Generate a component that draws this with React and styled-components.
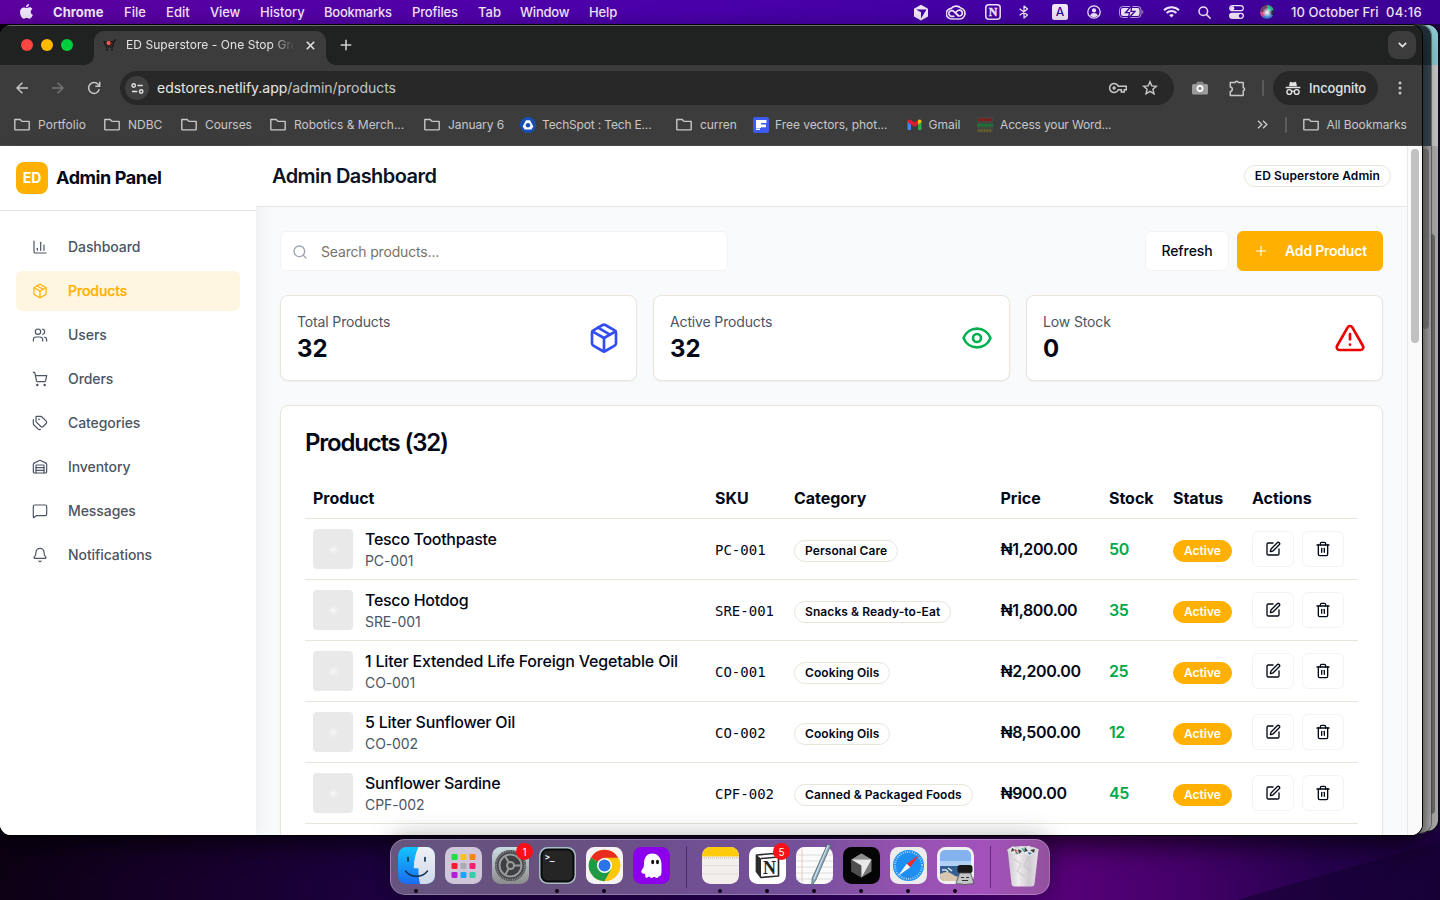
import React from "react";
import styled, { createGlobalStyle } from "styled-components";
import {
  ChartColumn, Package, Users, ShoppingCart, Tags, Warehouse, MessageSquare, Bell,
  Search, Plus, Eye, TriangleAlert, SquarePen, Trash2,
} from "lucide-react";

const Global = createGlobalStyle`
  *, *::before, *::after { box-sizing: border-box; }
  html, body { margin: 0; padding: 0; overflow: hidden; }
  body { font-family: Inter, "Liberation Sans", sans-serif; color: #020817; }
  svg { display: block; flex: none; }
`;

/* ---------- desktop ---------- */
const Desktop = styled.div`
  position: relative;
  width: 1440px;
  height: 900px;
  overflow: hidden;
  background:
    linear-gradient(164deg, transparent 62%, rgba(18, 0, 45, 0.55) 62.3%) 1130px 835px / 310px 65px no-repeat,
    linear-gradient(90deg, #0c0014 0%, #17002b 14%, #1c0040 27%, #25004f 50%, #38006b 64%, #560078 74%, #45006a 82%, #25004c 92%, #1c0040 100%);
`;

const MenuBar = styled.header`
  display: flex;
  align-items: center;
  height: 24px;
  padding-left: 53px;
  position: relative;
  background: linear-gradient(90deg, #5c009f 0%, #5400a6 20%, #4a00aa 45%, #4300a2 75%, #3c0094 100%);
  color: #f0e6fa;
  font-size: 13px;
  font-weight: 500;
  white-space: nowrap;
`;
const AppleSlot = styled.span`
  position: absolute;
  left: 19px;
  top: 3px;
`;
const MenuItem = styled.span`
  width: ${(p) => p.$w}px;
  padding-bottom: 1px;
  font-weight: ${(p) => (p.$bold ? 700 : 500)};
  letter-spacing: ${(p) => p.$ls || 0}px;
`;
const StatusSlot = styled.span`
  display: flex;
  justify-content: center;
  width: ${(p) => p.$w}px;
`;
const StatusGroup = styled.div`
  display: flex;
  align-items: center;
  margin-left: auto;
  width: 537px;
`;
const Clock = styled.span`
  margin-left: 4px;
  padding-bottom: 1px;
  width: ${(p) => p.$w}px;
  letter-spacing: ${(p) => p.$ls}px;
`;

/* ---------- windows ---------- */
const BackWindow = styled.div`
  position: absolute;
  top: 25px;
  left: 1380px;
  width: ${(p) => p.$w}px;
  height: ${(p) => p.$h}px;
  border-radius: 11px;
  overflow: hidden;
  display: flex;
  flex-direction: column;
  background: ${(p) => p.$body};
  box-shadow: 0 0 0 1px ${(p) => p.$edge};
  &::before { content: ""; height: 40px; background: ${(p) => p.$top}; }
  &::after { content: ""; height: 81px; background: ${(p) => p.$bar}; }
`;
const BackThumb = styled.i`
  position: absolute;
  right: ${(p) => p.$right}px;
  top: ${(p) => p.$top}px;
  width: 8px;
  height: ${(p) => p.$h}px;
  border-radius: 4px;
  background: ${(p) => p.$c};
`;
const Window = styled.div`
  position: absolute;
  top: 25px;
  left: 0;
  width: 1422px;
  height: 810px;
  border-radius: 11px;
  overflow: hidden;
  background: #3c3c3c;
  box-shadow: 0 0 0 1px #000, 0 10px 26px rgba(0, 0, 0, 0.7);
  display: flex;
  flex-direction: column;
`;

const TabStrip = styled.div`
  display: flex;
  height: 40px;
  flex: none;
  background: #1f2221;
  border-top: 1px solid #6b6e6d;
  padding: 5px 6px 0 21px;
`;
const Lights = styled.div`
  display: flex;
  gap: 8px;
  padding-top: 8px;
  width: 73px;
`;
const Light = styled.i`
  width: 12px;
  height: 12px;
  border-radius: 50%;
  background: ${(p) => p.$c};
`;
const Tab = styled.div`
  position: relative;
  display: flex;
  align-items: center;
  width: 232px;
  height: 34px;
  padding: 0 11px 6px 8px;
  border-radius: 10px 10px 0 0;
  background: #3c3c3c;
  > svg:last-of-type { margin-left: auto; }
  &::before, &::after {
    content: "";
    position: absolute;
    bottom: 0;
    width: 10px;
    height: 10px;
  }
  &::before { left: -10px; background: radial-gradient(circle at 0 0, transparent 9.6px, #3c3c3c 10.2px); }
  &::after { right: -10px; background: radial-gradient(circle at 100% 0, transparent 9.6px, #3c3c3c 10.2px); }
`;
const TabTitle = styled.span`
  margin-left: 9px;
  padding-bottom: 1px;
  width: 169px;
  overflow: hidden;
  white-space: nowrap;
  font-size: 12px;
  letter-spacing: 0.06px;
  color: #e3e3e3;
  mask-image: linear-gradient(90deg, #000 145px, transparent 169px);
`;
const NewTab = styled.span`
  padding: 8px 0 0 14px;
`;
const TabSearch = styled.span`
  margin-left: auto;
  width: 28px;
  height: 28px;
  border-radius: 9px;
  background: #3c3c3c;
  display: grid;
  place-items: center;
`;

const Toolbar = styled.div`
  display: flex;
  align-items: center;
  flex: none;
  height: 46px;
  padding-left: 4px;
`;
const ToolSlot = styled.span`
  display: flex;
  justify-content: center;
  align-items: center;
  width: ${(p) => p.$w}px;
`;
const Omnibox = styled.div`
  display: flex;
  align-items: center;
  width: 1054px;
  height: 34px;
  margin-left: 8px;
  padding-left: 5px;
  border-radius: 17px;
  background: #282828;
  font-size: 14px;
  letter-spacing: -0.03px;
  color: #c7c7c7;
`;
const SiteInfo = styled.span`
  width: 24px;
  height: 24px;
  margin-right: 8px;
  border-radius: 50%;
  background: #3f3f3f;
  display: grid;
  place-items: center;
`;
const Url = styled.span`
  padding-bottom: 2px;
`;
const Host = styled.span`
  color: #e8e8e8;
`;
const OmniActions = styled.span`
  display: flex;
  align-items: center;
  margin-left: auto;
  gap: 15px;
  padding-right: 16px;
`;
const VBar = styled.i`
  width: 2px;
  height: 16px;
  border-radius: 1px;
  background: #5c5c5c;
`;
const Incognito = styled.span`
  display: flex;
  align-items: center;
  gap: 8px;
  width: 105px;
  height: 34px;
  padding-left: 12px;
  border-radius: 17px;
  background: #282828;
  color: #e3e3e3;
  font-size: 13px;
  font-weight: 500;
  letter-spacing: -0.1px;
`;

const Bookmarks = styled.div`
  display: flex;
  align-items: center;
  flex: none;
  height: 35px;
  padding: 0 0 7px 14px;
  border-bottom: 1px solid #484848;
  color: #c7c7c7;
  font-size: 12px;
  white-space: nowrap;
`;
const Bookmark = styled.span`
  display: flex;
  align-items: center;
  gap: ${(p) => p.$gap || 8}px;
  width: ${(p) => p.$w}px;
  letter-spacing: ${(p) => p.$ls || 0}px;
`;

/* ---------- page ---------- */
const Page = styled.div`
  display: flex;
  flex: 1;
  min-height: 0;
  background: #fff;
`;
const Sidebar = styled.aside`
  position: relative;
  z-index: 1;
  flex: none;
  width: 256px;
  background: #fff;
  box-shadow: 4px 0 14px rgba(15, 23, 42, 0.05);
`;
const Brand = styled.div`
  display: flex;
  align-items: center;
  gap: 8px;
  height: 65px;
  padding: 0 16px 1px;
  border-bottom: 1px solid #e4e4e7;
  font-size: 18px;
  font-weight: 700;
  letter-spacing: -0.4px;
`;
const BrandMark = styled.span`
  width: 32px;
  height: 32px;
  border-radius: 8px;
  background: #ffb000;
  color: #fff;
  font-size: 14px;
  font-weight: 700;
  letter-spacing: 0;
  display: grid;
  place-items: center;
`;
const Lift = styled.span`
  padding-bottom: 2px;
`;
const Nav = styled.nav`
  display: flex;
  flex-direction: column;
  gap: 4px;
  padding: 16px;
`;
const NavItem = styled.a`
  display: flex;
  align-items: center;
  gap: 20px;
  height: 40px;
  padding-left: 16px;
  border-radius: 6px;
  font-size: 14px;
  font-weight: 500;
  letter-spacing: -0.08px;
  color: ${(p) => (p.$active ? "#ffb000" : "#4b5563")};
  background: ${(p) => (p.$active ? "#fff6e2" : "transparent")};
  ${Lift} { -webkit-text-stroke: ${(p) => (p.$active ? 0.25 : 0)}px; }
`;
const Main = styled.main`
  flex: 1;
  min-width: 0;
  display: flex;
  flex-direction: column;
  background: #f8fafc;
`;
const PageHeader = styled.div`
  position: relative;
  z-index: 2;
  display: flex;
  align-items: center;
  justify-content: space-between;
  flex: none;
  height: 61px;
  padding: 0 16px;
  background: #fff;
  border-bottom: 1px solid #e9e5dd;
`;
const PageTitle = styled.h1`
  margin: 0;
  font-size: 20px;
  font-weight: 600;
  letter-spacing: -0.56px;
  color: #0b1324;
`;
const Pill = styled.span`
  display: inline-flex;
  align-items: center;
  height: 22px;
  padding: 0 10px ${(p) => p.$up || 0}px;
  border: 1px solid ${(p) => (p.$solid ? "#ffb000" : "#e9e5dd")};
  border-radius: 11px;
  background: ${(p) => (p.$solid ? "#ffb000" : "#fff")};
  color: ${(p) => (p.$solid ? "#fff" : "#020817")};
  font-size: 12px;
  font-weight: 600;
  letter-spacing: ${(p) => (p.$solid ? 0 : 0.09)}px;
  white-space: nowrap;
`;
const Content = styled.div`
  display: flex;
  flex-direction: column;
  gap: 24px;
  padding: 24px 24px 0;
  flex: 1;
  min-height: 0;
  overflow: hidden;
`;
const ActionRow = styled.div`
  display: flex;
  gap: 8px;
  height: 40px;
  flex: none;
`;
const SearchBox = styled.label`
  display: flex;
  align-items: center;
  gap: 13px;
  width: 448px;
  margin-right: auto;
  padding: 1px 0 0 11px;
  border: 1px solid #f4f3f0;
  border-radius: 6px;
  background: #fff;
  color: #7c7265;
  font-size: 14px;
  letter-spacing: -0.17px;
`;
const Button = styled.button`
  display: flex;
  align-items: center;
  justify-content: center;
  gap: 16px;
  width: ${(p) => p.$w}px;
  height: ${(p) => p.$h || 40}px;
  padding: 0;
  border: 1px solid ${(p) => (p.$primary ? "#ffb000" : "#f4f3f1")};
  border-radius: 6px;
  background: ${(p) => (p.$primary ? "#ffb000" : "#fff")};
  color: ${(p) => (p.$primary ? "#fff" : "#020817")};
  font: ${(p) => (p.$primary ? 600 : 500)} 14px Inter, sans-serif;
  letter-spacing: ${(p) => (p.$primary ? -0.22 : -0.1)}px;
`;
const Stats = styled.div`
  display: grid;
  grid-template-columns: repeat(3, 1fr);
  gap: 16px;
  flex: none;
`;
const Card = styled.section`
  border: 1px solid #e9e5dd;
  border-radius: 8px;
  background: #fff;
  box-shadow: 0 1px 2px rgba(0, 0, 0, 0.05);
`;
const StatCard = styled(Card)`
  display: flex;
  align-items: center;
  justify-content: space-between;
  height: 86px;
  padding: 16px;
`;
const StatLabel = styled.div`
  font-size: 14px;
  line-height: 20px;
  letter-spacing: -0.14px;
  color: #4b5563;
`;
const StatValue = styled.div`
  padding-top: 1px;
  font-size: 24px;
  line-height: 31px;
  font-weight: 700;
`;
const ProductsCard = styled(Card)`
  flex: none;
  height: 520px;
  padding: 24px;
`;
const CardTitle = styled.h2`
  margin: 1px 0 23px;
  font-size: 24px;
  line-height: 24px;
  font-weight: 600;
  letter-spacing: -1.2px;
`;
const Row = styled.div`
  display: grid;
  grid-template-columns: 402px 79px 206.5px 108.5px 64px 79px 1fr;
  align-items: center;
  height: ${(p) => (p.$head ? 41 : 61)}px;
  border-bottom: 1px solid #e9e5dd;
  font-size: 16px;
  font-weight: ${(p) => (p.$head ? 700 : 500)};
  letter-spacing: ${(p) => (p.$head ? -0.03 : 0)}px;
`;
const Cell = styled.div`
  display: flex;
  align-items: center;
  padding-left: 8px;
  padding-top: ${(p) => p.$down || 0}px;
  gap: ${(p) => p.$gap || 0}px;
  white-space: nowrap;
`;
const Sku = styled.span`
  font: 400 14px "DejaVu Sans Mono", monospace;
`;
const Price = styled.span`
  font-weight: 600;
  letter-spacing: -0.4px;
`;
const Stock = styled.span`
  font-weight: 600;
  letter-spacing: -0.4px;
  color: #00a94a;
`;
const Thumb = styled.span`
  display: grid;
  place-items: center;
  width: 40px;
  height: 40px;
  border-radius: 4px;
  background: #e9e9e9;
  &::before {
    content: "";
    width: 9px;
    height: 9px;
    border-radius: 50%;
    background: radial-gradient(circle, #f6f6f6 0 1.5px, #eeeeee 2.2px);
  }
`;
const Name = styled.div`
  line-height: 24px;
  letter-spacing: ${(p) => p.$ls}px;
`;
const SubSku = styled.div`
  font-size: 14px;
  line-height: 20px;
  font-weight: 400;
  letter-spacing: -0.1px;
  color: #4b5563;
`;
const ScrollTrack = styled.div`
  flex: none;
  width: 15px;
  padding: 3px 0 0 3px;
  border-left: 1px solid #e8e8e8;
  background: #fafafa;
`;
const ScrollThumb = styled.div`
  width: 8px;
  height: 194px;
  border-radius: 4px;
  background: #c1c1c1;
`;

/* ---------- dock ---------- */
const Dock = styled.div`
  position: absolute;
  left: 390px;
  top: 839px;
  width: 660px;
  height: 56px;
  display: flex;
  padding: 7px 1.5px 0;
  border: 1px solid rgba(255, 255, 255, 0.25);
  border-radius: 15px;
  background: linear-gradient(90deg, #67547f 0%, #67517f 25%, #704f92 45%, #75509a 62%, #9552b0 78%, #a352bb 90%, #94519f 100%);
  box-shadow: 0 0 26px rgba(0, 0, 0, 0.38);
`;
const DockItem = styled.div`
  position: relative;
  width: 47px;
  display: flex;
  flex-direction: column;
  align-items: center;
  &::after {
    content: "";
    display: ${(p) => (p.$running ? "block" : "none")};
    width: 4px;
    height: 4px;
    margin-top: 5px;
    border-radius: 50%;
    background: #0a0310;
  }
`;
const DockSep = styled.i`
  width: 1px;
  height: 42px;
  margin: -1px ${(p) => p.$mr}px 0 11px;
  background: rgba(40, 15, 70, 0.55);
`;
const Badge = styled.span`
  position: absolute;
  right: 0.5px;
  top: -4px;
  width: 17px;
  height: 17px;
  border-radius: 50%;
  background: #fb1018;
  color: #fff;
  font-size: 10px;
  display: grid;
  place-items: center;
`;
const PromptText = styled.text`
  font: 700 8px "DejaVu Sans Mono", monospace;
  fill: #fff;
`;
const LetterN = styled.text`
  font: 700 ${(p) => p.$size}px "Liberation Serif", serif;
  fill: ${(p) => p.$c};
`;

/* ---------- drawings ---------- */
const line = { fill: "none", stroke: "currentColor", strokeLinecap: "round", strokeLinejoin: "round" };

const Apple = () => (
  <svg width="15" height="17" viewBox="0 0 15 17" fill="#f0e6fa">
    <path d="M10.1 1c.1 1.900-1.500 3.300-3.100 3.300C6.800 2.500 8.400 1.100 10.100 1z" />
    <path d="M7.400 5.100c.7 0 1.700-.8 3.100-.8 1.200 0 2.300.6 2.900 1.600-2.500 1.500-2 4.900.5 5.900-.5 1.500-1.900 3.900-3.500 3.900-1.100 0-1.500-.7-2.800-.7s-1.800.7-2.800.7C3 15.700 1 12.200 1 9.300c0-3.200 2-4.900 3.900-4.900 1.200 0 2 .7 2.500.7z" />
  </svg>
);
const CubeIcon = () => (
  <svg width="16" height="17" viewBox="0 0 16 17"><path d="M8 .8 15 4.700v7.800L8 16.400 1 12.500V4.700z" fill="#f0e6fa" /><path d="M3 5.500h10.500L8 14.500V8.300z" fill="#4600a6" /></svg>
);
const CloudIcon = () => (
  <svg width="20" height="15" viewBox="0 0 20 15" {...line} strokeWidth="1.700">
    <path d="M6 14h7.500a5.600 5.600 0 0 0 1.300-11A6.500 6.500 0 0 0 5.200 3.400 5.300 5.300 0 0 0 6 14z" />
    <path d="M12.200 10.900 7.800 6.400A2.900 2.900 0 1 0 6.300 11.300h1.500M9.300 7.500l3.500 3.400a2.900 2.900 0 1 0 .3-5.700c-1.300 0-2 .8-2.600 1.400" />
  </svg>
);
const NotionMini = () => (
  <svg width="16" height="16" viewBox="0 0 16 16"><rect x=".8" y=".8" width="14.400" height="14.400" rx="3" fill="none" stroke="#f0e6fa" strokeWidth="1.500" /><LetterN x="3.700" y="12.300" $size={12} $c="#f0e6fa" stroke="#f0e6fa" strokeWidth=".4">N</LetterN></svg>
);
const Bluetooth = () => (
  <svg width="10" height="14" viewBox="0 0 10 14" {...line} strokeWidth="1.200"><path d="m1 4 7.500 6L5 13V1l3.500 3L1 10" /></svg>
);
const InputA = () => (
  <svg width="16" height="16" viewBox="0 0 16 16"><rect width="16" height="16" rx="2.500" fill="#f0e6fa" /><text x="8" y="12.200" textAnchor="middle" fontSize="12" fontWeight="500" fill="#4300a2">A</text></svg>
);
const UserCircle = () => (
  <svg width="14" height="14" viewBox="0 0 14 14"><circle cx="7" cy="7" r="6.200" fill="none" stroke="#f0e6fa" strokeWidth="1.300" /><circle cx="7" cy="5.400" r="2.100" fill="#f0e6fa" /><path d="M3 10.400a4.600 4.600 0 0 1 8 0 5.500 5.500 0 0 1-8 0z" fill="#f0e6fa" /></svg>
);
const Battery = () => (
  <svg width="25" height="12" viewBox="0 0 25 12"><rect x=".5" y=".5" width="21.500" height="11" rx="3.300" fill="none" stroke="#b69fdd" /><rect x="2" y="2" width="18.500" height="8" rx="2" fill="#f0e6fa" /><path d="M23.300 4v4c1.300-.5 1.300-3.500 0-4z" fill="#b69fdd" /><path d="M12.800-.5 6.500 6.700h4L9.300 12.500l6.700-7.200h-4z" fill="#f0e6fa" stroke="#4200a0" strokeWidth="1.300" /></svg>
);
const Wifi = () => (
  <svg width="17" height="12" viewBox="0 0 17 12" {...line} strokeWidth="1.900" strokeLinecap="butt"><path d="M1 4.300a10.800 10.800 0 0 1 15 0M3.600 7a7 7 0 0 1 9.800 0" /><path d="M8.500 11.500 6.200 9.200a3.300 3.300 0 0 1 4.600 0z" fill="currentColor" stroke="none" /></svg>
);
const Loupe = () => (
  <svg width="13" height="13" viewBox="0 0 13 13" {...line} strokeWidth="1.500"><circle cx="5.300" cy="5.300" r="4.300" /><path d="m8.600 8.600 3.600 3.600" /></svg>
);
const Controls = () => (
  <svg width="15" height="14" viewBox="0 0 15 14"><rect x=".7" y=".7" width="13.600" height="5" rx="2.500" fill="none" stroke="#f0e6fa" strokeWidth="1.200" /><circle cx="3.300" cy="3.200" r="2" fill="#f0e6fa" /><rect y="7.700" width="15" height="6.200" rx="3.100" fill="#f0e6fa" /><circle cx="11.700" cy="10.800" r="1.900" fill="#4300a2" /></svg>
);
const Siri = () => (
  <svg width="14" height="14" viewBox="0 0 14 14">
    <defs><radialGradient id="siri"><stop stopColor="#fff" /><stop offset=".35" stopColor="#dff0f8" stopOpacity=".8" /><stop offset="1" stopColor="#fff" stopOpacity="0" /></radialGradient></defs>
    <circle cx="7" cy="7" r="7" fill="#2d2350" /><path d="M7 0a7 7 0 0 1 6.800 5L7 7z" fill="#21b88b" /><path d="M0 7a7 7 0 0 1 7-7v7z" fill="#7b3a68" /><path d="M.5 9A7 7 0 0 0 13 10.500L7 7z" fill="#3f83d4" /><path d="M0 7a7 7 0 0 0 3 5.500L7 7z" fill="#df4d86" /><circle cx="7.300" cy="7.500" r="5" fill="url(#siri)" />
  </svg>
);
const Cart = () => (
  <svg width="15" height="12" viewBox="0 0 15 12"><path d="M14.500 1h-2l-2 7h-6L2 2.500h10" fill="none" stroke="#151515" strokeWidth="1.200" /><circle cx="5" cy="10.500" r="1" fill="#151515" /><circle cx="10" cy="10.500" r="1" fill="#151515" /><path d="m4 2.500 1 4.500h5l1.500-4.500z" fill="#3b2524" /><circle cx="6.600" cy="4" r="2" fill="#ff5c4d" /></svg>
);
const Folder = () => (
  <svg width="16" height="13" viewBox="0 0 16 13" fill="none" stroke="#c7c7c7" strokeWidth="1.400" strokeLinejoin="round"><path d="M.8 11.200V1.500h5.400l1.700 1.900h7.300v7.800a.7.700 0 0 1-.7.700h-13a.7.700 0 0 1-.7-.7z" /></svg>
);
const Arrow = ({ dim, flip }) => (
  <svg width="12" height="12" viewBox="0 0 12 12" {...line} strokeLinecap="butt" strokeLinejoin="miter" stroke={dim ? "#767676" : "#c7c7c7"} strokeWidth="1.500" transform={flip ? "scale(-1,1)" : undefined}><path d="M12 6H1.200M6.300.7 1 6l5.300 5.300" /></svg>
);
const Reload = () => (
  <svg width="14" height="14" viewBox="0 0 14 14" fill="none" stroke="#c7c7c7" strokeWidth="1.500"><path d="M12.300 8.200A5.400 5.400 0 1 1 11 3.300l1.600 1.700" /><path d="M12.700.8v4.400H8.300" /></svg>
);
const Tune = () => (
  <svg width="13" height="11" viewBox="0 0 13 11" fill="none" stroke="#e3e3e3" strokeWidth="1.400"><circle cx="2.700" cy="2.500" r="1.700" /><path d="M6.500 2.500h5.300M1 8.500h5.300" /><circle cx="10.200" cy="8.500" r="1.700" /></svg>
);
const Key = () => (
  <svg width="18" height="12" viewBox="0 0 18 12" fill="none" stroke="#c7c7c7" strokeWidth="1.500"><path d="M9.300 4.300a4.500 4.500 0 1 0 0 3.400h3v2.200h3V7.700h2V4.300z" /><circle cx="5.100" cy="6" r="1.700" fill="#c7c7c7" stroke="none" /></svg>
);
const Star = () => (
  <svg width="16" height="16" viewBox="0 0 16 16" fill="none" stroke="#c7c7c7" strokeWidth="1.400"><path d="m8 1.700 1.800 4.200 4.600.4-3.500 3 1.100 4.500L8 11.400l-4 2.400 1.100-4.500-3.500-3 4.600-.4z" /></svg>
);
const Camera = () => (
  <svg width="16" height="14" viewBox="0 0 16 14"><rect y="3" width="16" height="10.500" rx="1.500" fill="#9b9b9b" /><path d="M4 3.500 5 .7h6l1 2.800z" fill="#8a8a8a" /><circle cx="8" cy="7.500" r="3.400" fill="#fff" /><circle cx="8" cy="7.500" r="1.700" fill="#8a8a8a" /></svg>
);
const Puzzle = () => (
  <svg width="17" height="17" viewBox="0 0 17 17" fill="none" stroke="#c7c7c7" strokeWidth="1.500" strokeLinejoin="round"><path d="M1.300 2.500h5c0-1.800 2.900-1.800 2.900 0h5v5.300c1.800 0 1.800 2.900 0 2.900v4.800H1.300v-4c2.700-.3 2.700-4.200 0-4.500z" /></svg>
);
const Hat = () => (
  <svg width="16" height="15" viewBox="0 0 16 15"><path d="M4 5.200 5 .8l3 .7 3-.7 1 4.400z" fill="#e3e3e3" /><path d="M.7 6.500h14.600" stroke="#e3e3e3" strokeWidth="1.500" /><circle cx="4.300" cy="11" r="2.400" fill="none" stroke="#e3e3e3" strokeWidth="1.400" /><circle cx="11.700" cy="11" r="2.400" fill="none" stroke="#e3e3e3" strokeWidth="1.400" /><path d="M6.600 10.600q1.400-.8 2.800 0" fill="none" stroke="#e3e3e3" strokeWidth="1.300" /></svg>
);
const TechSpot = () => (
  <svg width="16" height="16" viewBox="0 0 16 16"><circle cx="8" cy="8" r="8" fill="#1550b8" /><path d="M6 3.200h4l3.300 6.200-2 3H4.700l-2-3z" fill="#fff" /><circle cx="8" cy="8.300" r="2.300" fill="#1550b8" /></svg>
);
const Freepik = () => (
  <svg width="16" height="16" viewBox="0 0 16 16"><rect width="16" height="16" rx="2.500" fill="#3c5bf0" /><path d="M3 3h10.500v3H8v1.500h5v2.700H8V11H3zM3 11.500h4V13H3z" fill="#fff" /></svg>
);
const Gmail = () => (
  <svg width="15" height="11" viewBox="0 0 15 11"><path d="M.5 2v8c0 .5.300 1 1 1H4V4z" fill="#4285f4" /><path d="M14.500 2v8c0 .5-.3 1-1 1H11V4z" fill="#2fa84f" /><path d="M.5 2.500C.5.500 2.500-.2 4 .9l3.500 2.700V8L.5 3z" fill="#ea1a25" /><path d="M7.500 3.600 11 .9V5.500L7.500 8z" fill="#ea1a25" /><path d="M11 .9c1.500-1.100 3.500-.4 3.500 1.600V3L11 5.500z" fill="#fbbc04" /></svg>
);
const WordIcon = () => (
  <svg width="16" height="16" viewBox="0 0 16 16"><rect width="16" height="16" fill="#45443f" /><path d="M1 2.700h14" stroke="#8c1717" strokeWidth="2.500" strokeDasharray="2.500 .5" /><path d="M0 8.200h16" stroke="#167a35" strokeWidth="3" strokeDasharray="3 .6" /><path d="M1 13.500h14" stroke="#756b1d" strokeWidth="2" strokeDasharray="2 .8" /></svg>
);

const FinderIcon = () => (
  <svg width="37" height="37" viewBox="0 0 37 37">
    <defs><linearGradient id="fl" x2="0" y2="1"><stop stopColor="#12c4fb" /><stop offset="1" stopColor="#1a6bf2" /></linearGradient><linearGradient id="fr" x2="0" y2="1"><stop stopColor="#eef1f5" /><stop offset="1" stopColor="#cfd9ea" /></linearGradient><clipPath id="fc"><rect width="37" height="37" rx="8.500" /></clipPath></defs>
    <g clipPath="url(#fc)"><rect width="37" height="37" fill="url(#fl)" /><path d="M20.500 0C17.500 6 16 13 15.700 21.300h4.700c0 6 .4 11 1.600 15.700h15V0z" fill="url(#fr)" /></g>
    <path d="M10 10.500v3.500M27 10.500v3.500" stroke="#12304f" strokeWidth="1.700" strokeLinecap="round" /><path d="M7.500 24c5.500 7 16.500 7 22 0" fill="none" stroke="#12304f" strokeWidth="1.400" strokeLinecap="round" />
  </svg>
);
const padColors = ["#1fdd42", "#fcc21b", "#fb8414", "#fb1b2c", "#a7adb4", "#fb1d6f", "#b21fd6", "#1da5fb", "#2fd1a8"];
const LaunchpadIcon = () => (
  <svg width="37" height="37" viewBox="0 0 37 37"><rect width="37" height="37" rx="8.500" fill="#cfc6da" />
    {padColors.map((c, i) => <rect key={c} x={6.500 + (i % 3) * 9} y={7 + Math.floor(i / 3) * 9} width="6" height="6" rx="1.300" fill={c} />)}
  </svg>
);
const SettingsIcon = () => (
  <svg width="37" height="37" viewBox="0 0 37 37">
    <defs><linearGradient id="sg" x2="0" y2="1"><stop stopColor="#cbdde2" /><stop offset="1" stopColor="#8c8b8c" /></linearGradient></defs>
    <rect width="37" height="37" rx="8.500" fill="url(#sg)" /><circle cx="18.500" cy="18.500" r="15.500" fill="#3d3f42" />
    <circle cx="18.500" cy="18.500" r="14.300" fill="none" stroke="#8c8f92" strokeWidth="2" strokeDasharray="1 .8" /><circle cx="18.500" cy="18.500" r="11" fill="none" stroke="#98999b" strokeWidth="2" />
    <path d="M18.500 18.500h10.500M18.500 18.500l-5.300-9.300M18.500 18.500l-5.300 9.300" stroke="#98999b" strokeWidth="2.200" /><circle cx="18.500" cy="18.500" r="4.500" fill="#98999b" /><circle cx="18.500" cy="18.500" r="2.500" fill="#404246" />
  </svg>
);
const TerminalIcon = () => (
  <svg width="37" height="37" viewBox="0 0 37 37"><rect width="37" height="37" rx="8.500" fill="#a5bcc5" /><rect x="1.500" y="1.500" width="34" height="34" rx="7.500" fill="#090909" /><rect x="3.500" y="3.500" width="30" height="30" rx="5" fill="#252525" /><PromptText x="6" y="12.500">&gt;_</PromptText></svg>
);
const ChromeIcon = () => (
  <svg width="37" height="37" viewBox="0 0 37 37"><rect width="37" height="37" rx="8.500" fill="#f6f3f5" />
    <circle cx="18.500" cy="18.500" r="15.700" fill="#fcc60d" />
    <path d="M18.500 18.500 4.900 10.650a15.700 15.700 0 0 1 27.200 0z" fill="#ea2b1f" />
    <path d="M18.500 18.500 4.900 10.650A15.700 15.700 0 0 0 18.500 34.200l6.300-11z" fill="#1f9b47" />
    <path d="M18.500 10.650h13.600a15.700 15.700 0 0 1-13.600 23.550l6.800-11.700z" fill="#fcc60d" />
    <circle cx="18.500" cy="18.500" r="7.500" fill="#fff" /><circle cx="18.500" cy="18.500" r="6" fill="#2a73e8" />
  </svg>
);
const GhostIcon = () => (
  <svg width="37" height="37" viewBox="0 0 37 37"><rect width="37" height="37" rx="8.500" fill="#8c00ec" /><path d="M11 17c0-6.500 3-10.500 8.300-10.500 5.500 0 9.200 4.500 9.200 11.500v7c0 2.500-1 4.200-2.200 4.200-1 0-1 1.800-2.500 1.800s-1.500-1.200-2.500-1.200-1.200 1.200-2.800 1.200-1.200-1.500-2.300-1.500-1.200 1.200-2.500 1.200c-1.800 0-1.500-2.700-1.500-4-3 .5-4.500-1.200-3.700-3.200.8-1.500 2.500-2.500 2.500-6.500z" fill="#fff" /><ellipse cx="19.700" cy="15" rx="1.500" ry="2.300" fill="#111" /><ellipse cx="24.500" cy="15" rx="1.500" ry="2.300" fill="#111" /></svg>
);
const NotesIcon = () => (
  <svg width="37" height="37" viewBox="0 0 37 37"><defs><clipPath id="nc"><rect width="37" height="37" rx="8.500" /></clipPath></defs><g clipPath="url(#nc)"><rect width="37" height="37" fill="#f1eeeb" /><rect width="37" height="9.500" fill="#fdcb0a" /><path d="M0 11h37" stroke="#bcb6aa" strokeDasharray="1 1" /><path d="M0 18.500h37M0 27h37" stroke="#e2deda" /></g></svg>
);
const NotionIcon = () => (
  <svg width="37" height="37" viewBox="0 0 37 37"><rect width="37" height="37" rx="8.500" fill="#fff" /><path d="m7.500 8 17-1.500L29.500 10v19L12 30.500l-4.500-6z" fill="#fff" stroke="#2c2c2c" strokeWidth="1.700" strokeLinejoin="round" /><path d="m7.500 8 4.500 3.500v19l-4.500-6z" fill="#2c2c2c" /><path d="m12 11.500 17.500-1.500" stroke="#2c2c2c" strokeWidth="1.500" /><LetterN x="14" y="27" $size={18} $c="#222">N</LetterN></svg>
);
const TextEditIcon = () => (
  <svg width="37" height="43" viewBox="0 -3 37 43"><rect width="37" height="37" rx="8.500" fill="#fbfbfb" /><path d="M0 8h37M0 14h37M0 20h37M0 26h37M0 32h37" stroke="#dcdcdc" /><path d="M6 2v33" stroke="#efc3c3" /><path d="m31.500-3 3.300 1.200L20 32.500 15.500 39.500l.8-8.500z" fill="#8fb0c2" stroke="#4c5f6b" strokeWidth=".8" /><path d="M32-1.500 18 32" stroke="#d8e9f2" strokeWidth="1" /></svg>
);
const CursorIcon = () => (
  <svg width="37" height="37" viewBox="0 0 37 37"><rect width="37" height="37" rx="8.500" fill="#050505" /><path d="m18.500 6.500 10 6v12l-10 6-10-6v-12z" fill="#777" /><path d="m18.500 6.500 10 6h-20z" fill="#8d8d8d" /><path d="M8.500 12.500 18.500 18.500V30.500l-10-6z" fill="#4f4f4f" /><path d="M28.500 12.500 18.500 30.500V18.500l-10-6z" fill="#e8e8e8" /></svg>
);
const SafariIcon = () => (
  <svg width="37" height="37" viewBox="0 0 37 37"><rect width="37" height="37" rx="8.500" fill="#ececec" /><circle cx="18.500" cy="18.500" r="15.500" fill="#1d8ff2" /><circle cx="18.500" cy="18.500" r="13.500" fill="none" stroke="#d8eefc" strokeWidth="2" strokeDasharray=".7 1.600" /><path d="m29 8-12.300 8.700 3.600 3.600z" fill="#f22b2b" /><path d="m8 29 8.700-12.300 3.600 3.600z" fill="#f7f7f7" /></svg>
);
const PreviewIcon = () => (
  <svg width="39" height="39" viewBox="0 0 39 39"><rect x="1" y="1" width="37" height="37" rx="8.500" fill="#f0f0f0" /><rect x="4" y="4" width="31" height="31" rx="5" fill="#83b2ee" /><path d="M4 15h31v5H4z" fill="#b0d2f6" /><path d="M4 20h31v10a5 5 0 0 1-5 5H9a5 5 0 0 1-5-5z" fill="#355f91" /><path d="M4 28q7-4 12 0t9 2v5H9q-5 0-5-5z" fill="#d8c6ae" /><path d="M6 24h4l2 2M12 22l4 3" stroke="#e7eef4" strokeWidth="1.500" /><rect x="21.500" y="19" width="15" height="8" rx="2.500" fill="#191919" /><path d="M23.500 27h11l3.500 10.500q-9 2-18 0z" fill="#c3c6c7" stroke="#4b4b4b" strokeWidth=".8" /><path d="M25 31.500h3M30 31.500h3M26 34.500h6" stroke="#333" /></svg>
);
const TrashIcon = () => (
  <svg width="34" height="42" viewBox="0 0 34 42"><defs><linearGradient id="tg"><stop stopColor="#c9c4cd" /><stop offset=".35" stopColor="#eeecef" /><stop offset=".7" stopColor="#cfcad2" /><stop offset="1" stopColor="#e6e2e8" /></linearGradient></defs>
    <path d="M1.500 4h31l-4 35q-.3 2.500-3 2.500h-17q-2.700 0-3-2.500z" fill="url(#tg)" />
    <ellipse cx="17" cy="5.500" rx="15.500" ry="4.500" fill="#d9d7dc" /><path d="m3 4 4-3 4 3 4-3 3 3 5-3.500 3 3.500 4-1-1 5-6 3-4-2-5 2-5-3-4 1z" fill="#e4e4e6" />
    <path d="m6 3 3 2-4 2zM12 4l4 2-3 3zM19 2l3 4-4 1zM24 5l5-1-1 4zM9 8l2-1 1 2z" fill="#3c3c42" /><path d="m9 4 3 2-3 1z" fill="#c24a3c" /><path d="m15 3 4 1-1 3z" fill="#38b083" /><path d="m22 7 4 1-3 2z" fill="#3a72b4" />
    <path d="m8 14 7 5-4 7 8 6M22 13l-4 8 7 5" fill="none" stroke="#b9b5bd" strokeWidth="1.200" opacity=".45" />
  </svg>
);

/* ---------- data ---------- */
const menus = [["Chrome", 71, true, 0.05], ["File", 42, false, 0], ["Edit", 44, false, 0.05], ["View", 50, false, -0.1], ["History", 64, false, 0], ["Bookmarks", 88, false, -0.25], ["Profiles", 66, false, -0.15], ["Tab", 42, false, 0], ["Window", 69, false, -0.2], ["Help", 50, false, -0.1]];
const statuses = [[CubeIcon, 36], [CloudIcon, 34], [NotionMini, 40], [Bluetooth, 22], [InputA, 50], [UserCircle, 18], [Battery, 56], [Wifi, 24], [Loupe, 42], [Controls, 22], [Siri, 40]];
const bookmarks = [
  [Folder, "Portfolio", 90, 8, 0.05], [Folder, "NDBC", 77, 8, 0], [Folder, "Courses", 89, 8, -0.05], [Folder, "Robotics & Merch...", 154, 8, 0],
  [Folder, "January 6", 96, 8, -0.08], [TechSpot, "TechSpot : Tech E...", 156, 6, -0.17], [Folder, "curren", 77, 8, -0.05],
  [Freepik, "Free vectors, phot...", 153.5, 6, -0.05], [Gmail, "Gmail", 70.5, 7, 0], [WordIcon, "Access your Word...", 279.5, 7, -0.15],
];
const nav = [[ChartColumn, "Dashboard"], [Package, "Products"], [Users, "Users"], [ShoppingCart, "Orders"], [Tags, "Categories"], [Warehouse, "Inventory"], [MessageSquare, "Messages"], [Bell, "Notifications"]];
const stats = [["Total Products", "32", Package, "#334df0"], ["Active Products", "32", Eye, "#00b050"], ["Low Stock", "0", TriangleAlert, "#ee0000"]];
const products = [
  ["Tesco Toothpaste", "PC-001", "Personal Care", "₦1,200.00", 50, -0.3],
  ["Tesco Hotdog", "SRE-001", "Snacks & Ready-to-Eat", "₦1,800.00", 35, -0.28],
  ["1 Liter Extended Life Foreign Vegetable Oil", "CO-001", "Cooking Oils", "₦2,200.00", 25, -0.2],
  ["5 Liter Sunflower Oil", "CO-002", "Cooking Oils", "₦8,500.00", 12, -0.22],
  ["Sunflower Sardine", "CPF-002", "Canned & Packaged Foods", "₦900.00", 45, -0.29],
];
const dockLeft = [[FinderIcon, true], [LaunchpadIcon], [SettingsIcon, false, "1"], [TerminalIcon, true], [ChromeIcon, true], [GhostIcon]];
const dockRight = [[NotesIcon, true], [NotionIcon, true, "5"], [TextEditIcon, true], [CursorIcon, true], [SafariIcon, true], [PreviewIcon, true]];

const DockIconBox = styled.span`
  display: flex;
  align-items: center;
  justify-content: center;
  height: 37px;
`;
const DockApps = ({ apps }) => apps.map(([Icon, running, badge], i) => (
  <DockItem key={i} $running={running}>
    <DockIconBox><Icon /></DockIconBox>
    {badge && <Badge>{badge}</Badge>}
  </DockItem>
));

export default function App() {
  return (
    <Desktop>
      <Global />
      <MenuBar>
        <AppleSlot><Apple /></AppleSlot>
        {menus.map(([label, w, bold, ls]) => <MenuItem key={label} $w={w} $bold={bold} $ls={ls}>{label}</MenuItem>)}
        <StatusGroup>
          {statuses.map(([Icon, w], i) => <StatusSlot key={i} $w={w}><Icon /></StatusSlot>)}
          <Clock $w={91} $ls={0.05}>10 October Fri</Clock>
          <Clock $w={40} $ls={0.3}>04:16</Clock>
        </StatusGroup>
      </MenuBar>

      <BackWindow $w={58} $h={806} $edge="#0b0b0d" $top="#8fcdd5" $bar="#cfcfcf" $body="#b4b4b4">
        <BackThumb $right={3} $top={209} $h={580} $c="#707070" />
      </BackWindow>
      <BackWindow $w={51} $h={808} $edge="rgba(70, 70, 70, 0.6)" $top="#22323b" $bar="#3a4b57" $body="linear-gradient(90deg, #9c9c9c 42px, #bdbdbd 51px)">
        <BackThumb $right={2} $top={124} $h={180} $c="#858585" />
      </BackWindow>

      <Window>
        <TabStrip>
          <Lights><Light $c="#ff453f" /><Light $c="#ffb900" /><Light $c="#00ce3c" /></Lights>
          <Tab>
            <Cart />
            <TabTitle>ED Superstore - One Stop Gro</TabTitle>
            <svg width="9" height="9" viewBox="0 0 9 9" stroke="#e3e3e3" strokeWidth="1.600"><path d="m.8.8 7.400 7.400M8.200.8.800 8.200" /></svg>
          </Tab>
          <NewTab><svg width="12" height="12" viewBox="0 0 12 12" stroke="#d0d0d0" strokeWidth="1.600"><path d="M6 .7v10.600M.7 6h10.600" /></svg></NewTab>
          <TabSearch><svg width="9" height="6" viewBox="0 0 9 6" fill="none" stroke="#e3e3e3" strokeWidth="1.700"><path d="m.8.8 3.700 3.700L8.200.8" /></svg></TabSearch>
        </TabStrip>

        <Toolbar>
          <ToolSlot $w={36}><Arrow /></ToolSlot>
          <ToolSlot $w={36}><Arrow dim flip /></ToolSlot>
          <ToolSlot $w={36}><Reload /></ToolSlot>
          <Omnibox>
            <SiteInfo><Tune /></SiteInfo>
            <Url><Host>edstores.netlify.app</Host>/admin/products</Url>
            <OmniActions><Key /><Star /></OmniActions>
          </Omnibox>
          <ToolSlot $w={52}><Camera /></ToolSlot>
          <ToolSlot $w={23}><Puzzle /></ToolSlot>
          <ToolSlot $w={24}><VBar style={{ marginLeft: 3 }} /></ToolSlot>
          <Incognito><Hat />Incognito</Incognito>
          <ToolSlot $w={44}><svg width="4" height="14" viewBox="0 0 4 14" fill="#c7c7c7"><circle cx="2" cy="2" r="1.500" /><circle cx="2" cy="7" r="1.500" /><circle cx="2" cy="12" r="1.500" /></svg></ToolSlot>
        </Toolbar>

        <Bookmarks>
          {bookmarks.map(([Icon, label, w, gap, ls]) => <Bookmark key={label} $w={w} $gap={gap} $ls={ls}><Icon />{label}</Bookmark>)}
          <ToolSlot $w={12}><svg width="11" height="9" viewBox="0 0 11 9" fill="none" stroke="#c7c7c7" strokeWidth="1.400"><path d="m1 .7 3.800 3.800L1 8.300M6 .7l3.800 3.800L6 8.300" /></svg></ToolSlot>
          <ToolSlot $w={34}><VBar /></ToolSlot>
          <Bookmark $w={110} $ls={-0.07}><Folder />All Bookmarks</Bookmark>
        </Bookmarks>

        <Page>
          <Sidebar>
            <Brand><BrandMark>ED</BrandMark>Admin Panel</Brand>
            <Nav>
              {nav.map(([Icon, label]) => <NavItem key={label} $active={label === "Products"}><Icon size={16} strokeWidth={1.8} /><Lift>{label}</Lift></NavItem>)}
            </Nav>
          </Sidebar>
          <Main>
            <PageHeader><PageTitle>Admin Dashboard</PageTitle><Pill $up={1}>ED Superstore Admin</Pill></PageHeader>
            <Content>
              <ActionRow>
                <SearchBox><Search size={16} color="#9ca3af" />Search products...</SearchBox>
                <Button $w={84}><Lift>Refresh</Lift></Button>
                <Button $w={146} $primary><Plus size={16} strokeWidth={1.600} /><Lift>Add Product</Lift></Button>
              </ActionRow>
              <Stats>
                {stats.map(([label, value, Icon, color]) => (
                  <StatCard key={label}>
                    <div><StatLabel>{label}</StatLabel><StatValue>{value}</StatValue></div>
                    <Icon size={32} color={color} />
                  </StatCard>
                ))}
              </Stats>
              <ProductsCard>
                <CardTitle>Products (32)</CardTitle>
                <Row $head>
                  {["Product", "SKU", "Category", "Price", "Stock", "Status", "Actions"].map((h) => <Cell key={h}>{h}</Cell>)}
                </Row>
                {products.map(([name, sku, category, price, stock, ls]) => (
                  <Row key={sku}>
                    <Cell $gap={12}><Thumb /><div><Name $ls={ls}>{name}</Name><SubSku>{sku}</SubSku></div></Cell>
                    <Cell $down={2}><Sku>{sku}</Sku></Cell>
                    <Cell $down={3}><Pill>{category}</Pill></Cell>
                    <Cell><Price>{price}</Price></Cell>
                    <Cell><Stock>{stock}</Stock></Cell>
                    <Cell $down={3}><Pill $solid>Active</Pill></Cell>
                    <Cell $gap={8}>
                      <Button $w={42} $h={36}><SquarePen size={16} /></Button>
                      <Button $w={42} $h={36}><Trash2 size={16} /></Button>
                    </Cell>
                  </Row>
                ))}
              </ProductsCard>
            </Content>
          </Main>
          <ScrollTrack><ScrollThumb /></ScrollTrack>
        </Page>
      </Window>

      <Dock>
        <DockApps apps={dockLeft} />
        <DockSep $mr={10} />
        <DockApps apps={dockRight} />
        <DockSep $mr={9} />
        <DockItem><DockIconBox><TrashIcon /></DockIconBox></DockItem>
      </Dock>
    </Desktop>
  );
}
